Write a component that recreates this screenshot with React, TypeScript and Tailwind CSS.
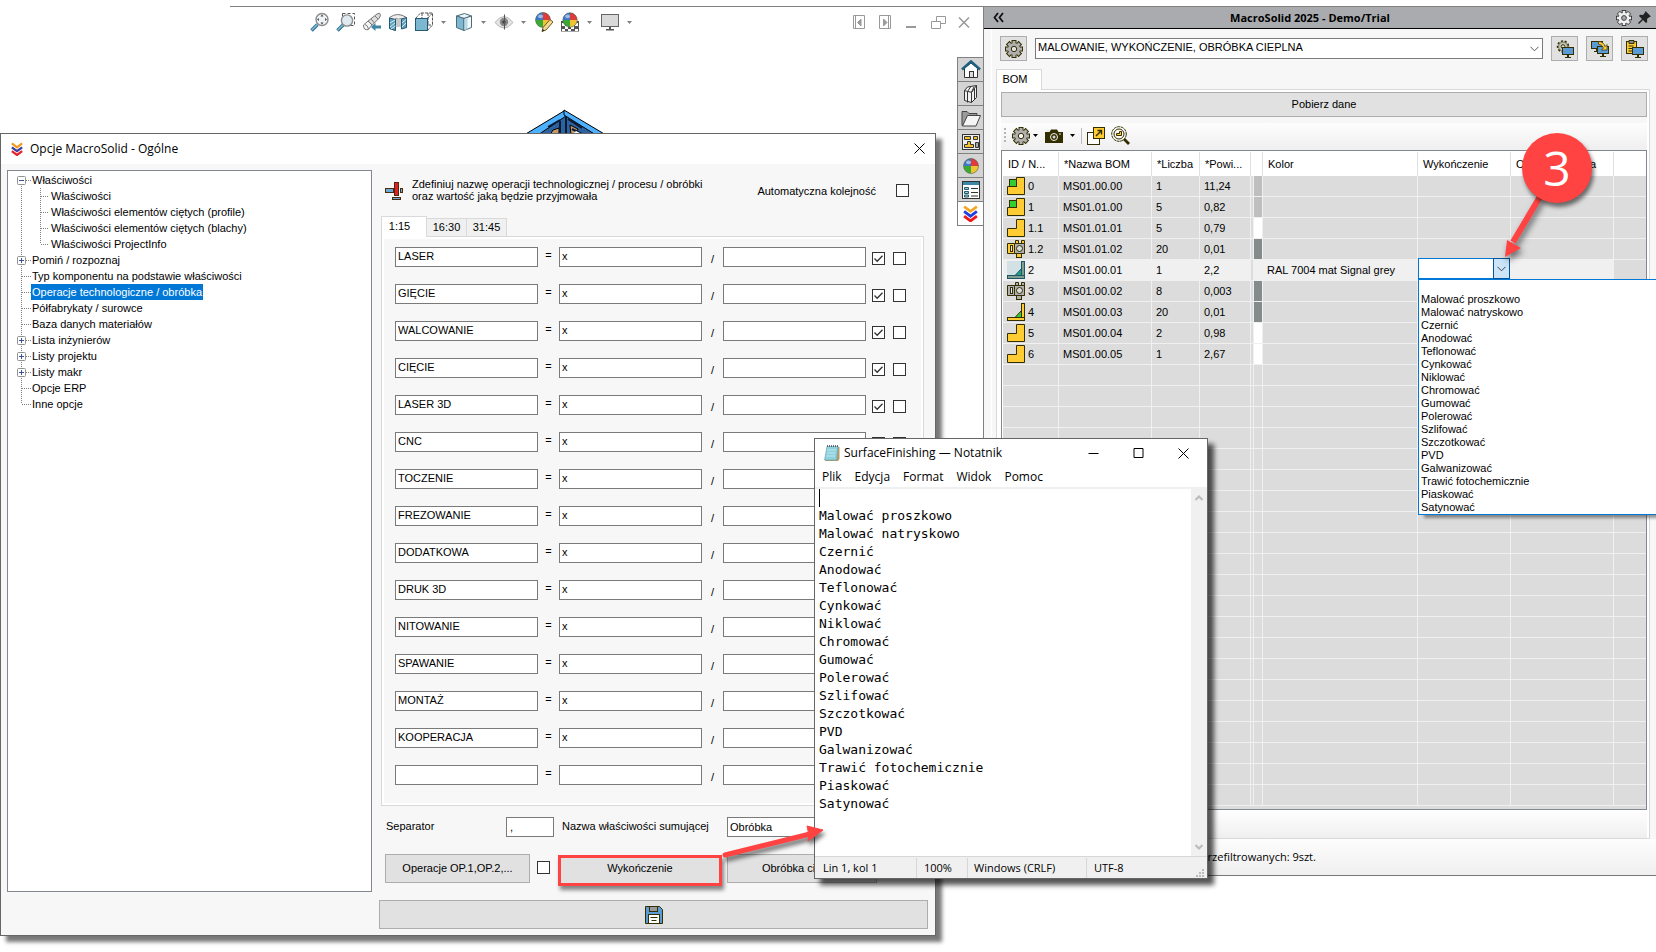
import React from "react";
import clsx from "clsx";

const UI = "font-['Liberation_Sans',Arial,sans-serif]";
const SEGOE = "font-['Open_Sans','Noto_Sans',sans-serif]";

const FINISHES = [
  "Malować proszkowo",
  "Malować natryskowo",
  "Czernić",
  "Anodować",
  "Teflonować",
  "Cynkować",
  "Niklować",
  "Chromować",
  "Gumować",
  "Polerować",
  "Szlifować",
  "Szczotkować",
  "PVD",
  "Galwanizować",
  "Trawić fotochemicznie",
  "Piaskować",
  "Satynować",
];

const OPERATIONS = [
  "LASER",
  "GIĘCIE",
  "WALCOWANIE",
  "CIĘCIE",
  "LASER 3D",
  "CNC",
  "TOCZENIE",
  "FREZOWANIE",
  "DODATKOWA",
  "DRUK 3D",
  "NITOWANIE",
  "SPAWANIE",
  "MONTAŻ",
  "KOOPERACJA",
  "",
];

type RowIcon = "assembly" | "part" | "mixed" | "weldSelected" | "purchased" | "weld";

type BomRow = {
  id: string;
  name: string;
  count: string;
  area: string;
  icon: RowIcon;
  swatch: string;
  color?: string;
  selected?: boolean;
};

const BOM: BomRow[] = [
  { id: "0", name: "MS01.00.00", count: "1", area: "11,24", icon: "assembly", swatch: "bg-[#bfbfbf]" },
  { id: "1", name: "MS01.01.00", count: "5", area: "0,82", icon: "assembly", swatch: "bg-[#bfbfbf]" },
  { id: "1.1", name: "MS01.01.01", count: "5", area: "0,79", icon: "part", swatch: "bg-white" },
  { id: "1.2", name: "MS01.01.02", count: "20", area: "0,01", icon: "mixed", swatch: "bg-[#848b8b]" },
  {
    id: "2",
    name: "MS01.00.01",
    count: "1",
    area: "2,2",
    icon: "weldSelected",
    swatch: "bg-[#f0f0f0]",
    color: "RAL 7004 mat Signal grey",
    selected: true,
  },
  { id: "3", name: "MS01.00.02", count: "8", area: "0,003", icon: "purchased", swatch: "bg-[#848b8b]" },
  { id: "4", name: "MS01.00.03", count: "20", area: "0,01", icon: "weld", swatch: "bg-[#848b8b]" },
  { id: "5", name: "MS01.00.04", count: "2", area: "0,98", icon: "part", swatch: "bg-white" },
  { id: "6", name: "MS01.00.05", count: "1", area: "2,67", icon: "part", swatch: "bg-white" },
];

const EMPTY_ROWS = Array.from({ length: 21 }, (_, i) => i);

/* ---------- icons ---------- */

const Gear: React.FC<{ size?: number; stroke?: string; fill?: string; hole?: string }> = ({
  size = 18,
  stroke = "#332e00",
  fill = "#b0b0b0",
  hole = "#f7f7f7",
}) => (
  <svg width={size} height={size} viewBox="0 0 18 18">
    {[0, 45, 90, 135].map((a) => (
      <rect key={a} x="7" y="0.5" width="4" height="17" fill={fill} stroke={stroke} transform={`rotate(${a} 9 9)`} />
    ))}
    <circle cx="9" cy="9" r="6" fill={fill} />
    <circle cx="9" cy="9" r="2.7" fill={hole} stroke={stroke} />
  </svg>
);

const Caret: React.FC<{ color?: string }> = ({ color = "#808080" }) => (
  <svg width="5" height="3" viewBox="0 0 5 3">
    <path d="M0 0h5L2.5 3z" fill={color} />
  </svg>
);

const Logo: React.FC<{ colors: string[]; size?: number }> = ({ colors, size = 14 }) => (
  <svg width={size} height={size + 2} viewBox="0 0 14 16" fill="none" strokeWidth="2.6">
    {colors.map((c, i) => (
      <path key={c} d={`M1 ${1.5 + i * 4.5}l6 4.5 6-4.5`} stroke={c} />
    ))}
  </svg>
);

const Magnifier = () => (
  <g>
    <path d="M1.5 18.5l6-6" stroke="#2f6f8f" strokeWidth="3.6" />
    <path d="M1.8 18l5.4-5.4" stroke="#7fb6d0" strokeWidth="1.6" />
  </g>
);

const ZoomFit = () => (
  <svg width="20" height="20" viewBox="0 0 20 20" fill="none">
    <Magnifier />
    <circle cx="12" cy="7.5" r="6" fill="#eef3f6" stroke="#8c8c8c" strokeWidth="1.4" />
    <path d="M12 2.6l1.5 1.9h-3zM12 12.4l1.5-1.9h-3zM7 7.5l1.9-1.5v3zM17 7.5l-1.9-1.5v3z" fill="#444" />
  </svg>
);

const ZoomArea = () => (
  <svg width="20" height="20" viewBox="0 0 20 20" fill="none">
    <rect x="6.5" y="1.5" width="12" height="12" stroke="#555" strokeDasharray="3 2" />
    <Magnifier />
    <circle cx="11" cy="8.5" r="5.6" fill="#dfeaf0" stroke="#8c8c8c" strokeWidth="1.4" />
  </svg>
);

const PrevView = () => (
  <svg width="20" height="20" viewBox="0 0 20 20" fill="none" stroke="#777">
    <path d="M6 9l9-7 2.500-.8 1 2-1.200 2.800-7 7z" fill="#ddd" />
    <path d="M13 4l3 3M9 7l3.500 4" />
    <path d="M1.500 13l4.500-4 4 4-3.500 4.500q-5 1.500-5-4.500z" fill="#f4f4f4" />
    <path d="M3 12.500q3 1 3.500 4.500" />
    <path d="M9 15l4.500-4v2.500h5.500v3h-5.500V19z" fill="#3c87a8" stroke="none" />
  </svg>
);

const SectionView = () => (
  <svg width="20" height="20" viewBox="0 0 20 20">
    <path d="M1.500 5.500q8-6 17 0v10h-5v-9h-6v12l-6-2z" fill="#eee" stroke="#777" />
    <path d="M7.500 7q3-2 6 0v8h-6z" fill="#c9c9c9" />
    <path d="M1.500 6l6 1.500v11l-6-2z" fill="#5ea3bf" stroke="#245a73" />
    <path d="M13.500 7l5-1.500v10l-5 1.500z" fill="#5ea3bf" stroke="#245a73" />
    <path d="M2 11l5-3M2 15l5-4M3 17l4.500-3M14 11l4-3.500M14 15l4-4" stroke="#d5ecf5" />
  </svg>
);

const ViewCube = () => (
  <svg width="20" height="20" viewBox="0 0 20 20" fill="none">
    <path
      d="M1.500 6.500l5-5.500h12v12l-5 5.500M13.500 6.500l5-5.500M14 13h4.500M8 1v5M14 1v12"
      stroke="#555"
      strokeDasharray="3 1"
    />
    <rect x="1.500" y="6.500" width="12" height="12" fill="#7db7d0" stroke="#245a73" />
  </svg>
);

const DisplayStyle = () => (
  <svg width="20" height="20" viewBox="0 0 20 20" stroke="#4d6a78">
    <path d="M2.500 4l8-2.500 7 2.500-7.500 2.500z" fill="#e9f5fa" />
    <path d="M2.500 4l7.500 2.500v12l-7.500-3z" fill="#7db7d0" />
    <path d="M10 6.500l7.500-2.500v11.500l-7.500 3z" fill="#f4f8fa" />
    <path d="M10.500 7l3-1v11l-3 1z" fill="#b6d9e6" stroke="none" />
  </svg>
);

const Eye = () => (
  <svg width="20" height="20" viewBox="0 0 20 20">
    <path d="M1 10.500q9-12 18 0-9 11-18 0z" fill="#e4e4e4" stroke="#b5b5b5" />
    <circle cx="10" cy="10" r="4.200" fill="#888" />
    <circle cx="10" cy="10" r="1.800" fill="#444" />
    <path d="M10.500 2.500v15" stroke="#555" />
  </svg>
);

const Ball: React.FC<{ cx: number; cy: number; r: number }> = ({ cx, cy, r }) => (
  <g>
    <circle cx={cx} cy={cy} r={r} fill="#3aaa35" />
    <path d={`M${cx} ${cy}V${cy - r}A${r} ${r} 0 0 1 ${cx + r} ${cy}z`} fill="#e03b3b" />
    <path d={`M${cx} ${cy}V${cy - r}A${r} ${r} 0 0 0 ${cx - r} ${cy}z`} fill="#3e78c9" />
    <path d={`M${cx} ${cy}H${cx + r}A${r} ${r} 0 0 1 ${cx} ${cy + r}z`} fill="#f0c330" />
    <ellipse cx={cx - r / 3} cy={cy - r / 2} rx={r / 3} ry={r / 4} fill="#fff" opacity="0.500" />
    <circle cx={cx} cy={cy} r={r} fill="none" stroke="#555" strokeOpacity="0.500" />
  </g>
);

const Appearance = () => (
  <svg width="20" height="20" viewBox="0 0 20 20">
    <Ball cx={9} cy={8} r={7.5} />
    <path d="M8 19.500l1-4 7-8 3 2.500-7 8z" fill="#f3d98b" stroke="#6b5a2a" />
    <path d="M8 19.500l.8-2.500 1.700 1.500z" fill="#222" />
  </svg>
);

const Scene = () => (
  <svg width="20" height="20" viewBox="0 0 20 20">
    <rect x="1" y="9" width="18" height="10.500" fill="#555" />
    <path d="M2 11h3v3H2zM5 14h3v3H5zM11 14h3v3h-3zM15 11h3v3h-3zM2 17h3v2H2zM8 17h3v2H8zM15 17h3v2h-3z" fill="#fff" />
    <Ball cx={10} cy={8} r={7.2} />
  </svg>
);

const Monitor = () => (
  <svg width="20" height="20" viewBox="0 0 20 20">
    <rect x="1.500" y="2.500" width="17" height="12" fill="#d9d9d9" stroke="#666" />
    <path d="M9 15h2v2h3v1.500H6V17h3z" fill="#555" />
  </svg>
);

const BomIcon: React.FC<{ kind: RowIcon }> = ({ kind }) => {
  const dark = "#332e00";
  const body = kind === "mixed" ? "#ffcc33" : "#b0b0b0";
  return (
    <svg
      width="18"
      height="18"
      viewBox="0 0 18 18"
      stroke={dark}
      className={kind === "weldSelected" ? "bg-[#d3e0e4]" : undefined}
    >
      {(kind === "assembly" || kind === "part") && <path d="M9.500 .5h8v17h-17v-8h9z" fill="#ffcc33" />}
      {kind === "assembly" && <rect x="2.500" y="2.500" width="7" height="7" fill="#33cc33" />}
      {(kind === "mixed" || kind === "purchased") && (
        <>
          <rect x="9.500" y="12.500" width="5" height="5" fill={body} />
          <path d="M8.500 .5h3v3h3v-3h3v13h-9z" fill={body} />
          <path d="M.5 3.500h7v10h-7z" fill={body} />
          <path d="M7.500 3.500h10v10h-10z" fill="#b0b0b0" />
          <rect x="3.500" y="5.500" width="2" height="6" fill="#e8e8e8" />
          <circle cx="12.500" cy="8.500" r="3" fill="#dcdcdc" />
        </>
      )}
      {(kind === "weld" || kind === "weldSelected") && (
        <g stroke={kind === "weld" ? dark : "#1f5668"}>
          <path d="M8 14.500l6.500-7v7z" fill={kind === "weld" ? "#33cc33" : "#1f9d86"} />
          <rect x="14.500" y=".5" width="3" height="14" fill={kind === "weld" ? "#ffcc33" : "#7f9f8c"} />
          <rect x=".5" y="14.500" width="17" height="3" fill={kind === "weld" ? "#ffcc33" : "#7f9f8c"} />
        </g>
      )}
    </svg>
  );
};

const Screen: React.FC<{ x: number; y: number }> = ({ x, y }) => (
  <g transform={`translate(${x} ${y})`}>
    <rect x="0.500" y="0.500" width="11" height="7" fill="#5b9bd5" stroke="#332e00" />
    <path d="M5 8h2v2h2v1H3v-1h2z" fill="#332e00" />
  </g>
);

/* ---------- shared controls ---------- */

const CheckBox: React.FC<{ label: string; checked?: boolean }> = ({ label, checked }) => (
  <span className="relative block size-[13px] shrink-0">
    <input
      type="checkbox"
      aria-label={label}
      defaultChecked={checked}
      className="peer block size-[13px] appearance-none border border-[#333] bg-white"
    />
    <svg
      viewBox="0 0 13 13"
      className="pointer-events-none absolute inset-0 hidden peer-checked:block"
      fill="none"
      stroke="#333"
      strokeWidth="1.3"
    >
      <path d="M2.500 6.500l2.700 2.800 5.300-5.600" />
    </svg>
  </span>
);

const TextBox: React.FC<{ label: string; value?: string; className?: string }> = ({ label, value = "", className }) => (
  <input
    type="text"
    aria-label={label}
    defaultValue={value}
    className={clsx("h-5 border border-[#7a7a7a] bg-white px-[2px] pb-[2px] text-[11px] leading-4 text-black", className)}
  />
);

const PushButton: React.FC<{ children: React.ReactNode; label?: string; className?: string }> = ({
  children,
  label,
  className,
}) => (
  <button
    type="button"
    aria-label={label}
    className={clsx("flex items-center justify-center border border-[#adadad] bg-[#e1e1e1] text-[11px]", className)}
  >
    {children}
  </button>
);

/* ---------- viewport ---------- */

const TOOLS: { label: string; icon: React.ReactNode; menu?: boolean }[] = [
  { label: "Powiększ do okna", icon: <ZoomFit /> },
  { label: "Powiększ obszar", icon: <ZoomArea /> },
  { label: "Poprzedni widok", icon: <PrevView /> },
  { label: "Widok przekroju", icon: <SectionView /> },
  { label: "Orientacja widoku", icon: <ViewCube />, menu: true },
  { label: "Styl wyświetlania", icon: <DisplayStyle />, menu: true },
  { label: "Ukryj / pokaż", icon: <Eye />, menu: true },
  { label: "Edytuj wygląd", icon: <Appearance /> },
  { label: "Zastosuj scenę", icon: <Scene />, menu: true },
  { label: "Ustawienia widoku", icon: <Monitor />, menu: true },
];

const WINDOW_ICONS = [
  <g key="l">
    <path d="M.5 .5h11v13H.5zM2.500 .5v13" />
    <path d="M8 4v7L4.500 7.500z" fill="#999" />
  </g>,
  <g key="r">
    <path d="M.5 .5h11v13H.5zM9.500 .5v13" />
    <path d="M4.500 4v7L8 7.500z" fill="#999" />
  </g>,
  <path key="m" d="M1 12h10" strokeWidth="2" />,
  <path key="o" d="M5.500 6V1.500h9v7H10M.5 6.500h9v7h-9z" />,
  <path key="x" d="M2 2.500l10 10M12 2.500l-10 10" strokeWidth="1.5" />,
];

const TaskTabs: React.FC = () => {
  const icons: [string, React.ReactNode][] = [
    [
      "Zasoby",
      <g key="home" stroke="#333">
        <path d="M3.500 8v9.500h13V8L10 3z" fill="#fff" />
        <path d="M1 9.500l9-8 9 8" fill="none" stroke="#1f5f80" strokeWidth="2.600" />
        <rect x="8.500" y="11.500" width="4" height="6" fill="#ddd" />
      </g>,
    ],
    [
      "Biblioteka",
      <g key="books" stroke="#333" fill="#f2f2f2">
        <path d="M3.500 6.500l3-3.500 9-1.500v12l-5 5-7-2z" />
        <path d="M3.500 6.500l3 1v11M6.500 7.500l3-4.500M7 7.500l3.500 .8v10M10.500 8.300l2.500-5.500M10.500 8.500l5-7M13.500 4.500v11.500" fill="none" />
      </g>,
    ],
    [
      "Eksplorator",
      <g key="folder" stroke="#444">
        <path d="M1 3.500h5l2 2h8v4l-4 8H1z" fill="#9a9a9a" />
        <path d="M1.500 18l5-10.500h13L15 18z" fill="#f5f5f5" />
      </g>,
    ],
    [
      "Paleta widoków",
      <g key="palette" stroke="#333">
        <rect x="1.500" y="2.500" width="17" height="15" fill="#eee" />
        <path d="M3.500 4.500h6v3h-6zM12.500 4.500h4v3h-4zM6.500 9.500h3v3h3v3h-9v-3h3z" fill="#f5c22b" />
        <path d="M14.500 10.500h3v5h-3z" fill="#aaa" />
      </g>,
    ],
    ["Wyglądy", <Ball key="ball" cx={10} cy={10} r={7.5} />],
    [
      "Właściwości",
      <g key="props">
        <rect x="1.500" y="1.500" width="17" height="17" fill="#fff" stroke="#333" />
        <path d="M2 3.500h16" stroke="#3c87a8" strokeWidth="3" />
        <path d="M3.500 7.500h4v2h-4zM3.500 11.500h4v2h-4zM3.500 15h4v2h-4z" fill="#9cc" stroke="#245a73" />
        <path d="M10 8.500h7M10 12.500h7M10 16h7" stroke="#333" />
      </g>,
    ],
  ];
  return (
    <nav className="mt-[27px] flex w-[26px] flex-col border-y border-l border-[#808080]">
      {icons.map(([label, icon]) => (
        <button
          key={label}
          type="button"
          aria-label={label}
          className="flex h-6 items-center justify-center border-b border-[#808080] bg-[#d4d4d4]"
        >
          <svg width="20" height="20" viewBox="0 0 20 20">
            {icon}
          </svg>
        </button>
      ))}
      <button type="button" aria-label="MacroSolid" className="flex h-[23px] items-center justify-center bg-white">
        <Logo colors={["#f5a623", "#1f3fe0", "#f01818"]} size={15} />
      </button>
    </nav>
  );
};

const Viewport: React.FC = () => (
  <div className="relative ml-[230px] flex flex-1 items-start justify-between border-t border-[#808080] pl-20">
    <div className="flex items-center gap-[6px] pt-[5px]">
      {TOOLS.map((t) => (
        <button key={t.label} type="button" aria-label={t.label} className="flex items-center">
          {t.icon}
          {t.menu && (
            <span className="flex w-[14px] justify-center pl-[5px]">
              <Caret />
            </span>
          )}
        </button>
      ))}
    </div>
    <div className="flex flex-col items-end">
      <div className="flex gap-[11px] pt-2 pr-[11px]">
        {WINDOW_ICONS.map((p) => (
          <button key={p.key} type="button" aria-label={`Okno ${p.key}`}>
            <svg width="15" height="15" viewBox="0 0 15 15" fill="none" stroke="#999">
              {p}
            </svg>
          </button>
        ))}
      </div>
      <TaskTabs />
    </div>
    <svg className="absolute top-[102px] left-[294px]" width="82" height="26" viewBox="0 0 82 26">
      <path d="M0 26L40 2l42 24z" fill="#2c62a0" />
      <path d="M0 26L40 2l2 5L14 26z" fill="#4db1ff" stroke="#000" />
      <path d="M82 26L40 1v5l32 20z" fill="#4db1ff" stroke="#000" />
      <path d="M26 26l3-5 6-2v7zM46 16l8 4-4 6h-3z" fill="#c49a6c" stroke="#000" />
      <path d="M36 12v14M42 8v18M24 18l12-7M44 10l14 9M48 20l12 6" stroke="#0a1a30" strokeWidth="2" />
      <path d="M48 26l4-4 8 4z" fill="#fff" />
    </svg>
  </div>
);

/* ---------- MacroSolid panel ---------- */

const FinishCombo: React.FC = () => (
  <div className="relative -mt-[2px] h-[18px]">
    <div className="flex h-[21px] border border-[#0078d7] bg-white">
      <input type="text" aria-label="Wykończenie" className="h-full min-w-0 flex-1 px-1" />
      <button
        type="button"
        aria-label="Rozwiń"
        className="-my-px -mr-px flex w-[17px] items-center justify-center border border-[#005499] bg-[#cce4f7]"
      >
        <svg width="9" height="6" viewBox="0 0 9 6" fill="none" stroke="#444">
          <path d="M.5 .8l4 4 4-4" />
        </svg>
      </button>
    </div>
    <ul
      role="listbox"
      aria-label="Lista wykończeń"
      className="absolute top-[21px] left-0 z-10 w-60 border border-[#0078d7] bg-white pt-[13px] shadow-[6px_3px_3px_#00000066]"
    >
      {FINISHES.map((f) => (
        <li
          key={f}
          role="option"
          aria-selected="false"
          className="h-[13px] pl-[2px] text-[11px] leading-[13px] whitespace-nowrap"
        >
          {f}
        </li>
      ))}
    </ul>
  </div>
);

const CELL = "h-[21px] border-r border-b border-[#f0f0f0] p-0 pl-1 whitespace-nowrap";
const HEAD = "h-6 border-r border-[#e0e0e0] bg-white p-0 pl-[5px] text-left font-normal whitespace-nowrap";

const BomTable: React.FC = () => (
  <div className="border border-[#828790] bg-[#dcdcdc] pb-[3px]">
    <table className="w-full table-fixed border-separate border-spacing-0 border-t border-l border-white text-[11px] leading-[13px]">
      <colgroup>
        <col className="w-[56px]" />
        <col className="w-[93px]" />
        <col className="w-[48px]" />
        <col className="w-[51px]" />
        <col className="w-[12px]" />
        <col className="w-[155px]" />
        <col className="w-[93px]" />
        <col className="w-[103px]" />
        <col />
      </colgroup>
      <thead>
        <tr>
          <th className={HEAD}>ID / N...</th>
          <th className={HEAD}>*Nazwa BOM</th>
          <th className={HEAD}>*Liczba</th>
          <th className={HEAD}>*Powi...</th>
          <th className={HEAD} aria-label="Podgląd koloru" />
          <th className={HEAD}>Kolor</th>
          <th className={HEAD}>Wykończenie</th>
          <th className={HEAD}>Obróbka cieplna</th>
          <th className="bg-white" aria-label="Pusta" />
        </tr>
      </thead>
      <tbody>
        {BOM.map((r) => (
          <tr key={r.id}>
            <td className={clsx(CELL, r.selected && "bg-[#f0f0f0]")}>
              <span className="flex h-5 items-center gap-[3px]">
                <BomIcon kind={r.icon} />
                {r.id}
              </span>
            </td>
            <td className={clsx(CELL, r.selected && "bg-[#f0f0f0]")}>{r.name}</td>
            <td className={clsx(CELL, r.selected && "bg-[#f0f0f0]")}>{r.count}</td>
            <td className={clsx(CELL, r.selected && "bg-[#f0f0f0]")}>{r.area}</td>
            <td className="border-r border-b border-[#f0f0f0] p-0 pl-[2px]">
              <div className={clsx("h-5 border-l border-[#f0f0f0]", r.swatch)} />
            </td>
            <td className={clsx(CELL, r.selected && "bg-[#f0f0f0]")}>{r.color}</td>
            <td className="border-r border-b border-[#f0f0f0] p-0 align-top">{r.selected && <FinishCombo />}</td>
            <td className={clsx(CELL, r.selected && "bg-[#f0f0f0]")} />
            <td className="border-b border-[#f0f0f0]" />
          </tr>
        ))}
        {EMPTY_ROWS.map((n) => (
          <tr key={n}>
            <td className={CELL} />
            <td className={CELL} />
            <td className={CELL} />
            <td className={CELL} />
            <td className="border-r border-b border-[#f0f0f0] p-0 pl-[2px]">
              <div className="h-5 border-l border-[#f0f0f0]" />
            </td>
            <td className={CELL} />
            <td className={CELL} />
            <td className={CELL} />
            <td className="border-b border-[#f0f0f0]" />
          </tr>
        ))}
      </tbody>
    </table>
  </div>
);

const Panel: React.FC = () => (
  <aside className="relative w-[673px] shrink-0 border-t border-b border-l border-t-[#808080] border-b-[#777] border-l-[#808080] bg-[#f7f7f7]">
    <header className="flex h-[22px] items-center border-b border-black bg-[#a9abae] pr-[5px] pl-[9px]">
      <button type="button" aria-label="Zwiń panel">
        <svg width="11" height="11" viewBox="0 0 11 11" fill="none" stroke="#111" strokeWidth="1.8">
          <path d="M5 1L1.500 5.500 5 10M10 1L6.500 5.500 10 10" />
        </svg>
      </button>
      <h2 className={clsx("flex-1 text-center text-[11px] leading-4 font-bold", SEGOE)}>MacroSolid 2025 - Demo/Trial</h2>
      <div className="flex items-center gap-[6px]">
        <button type="button" aria-label="Ustawienia">
          <Gear size={16} stroke="#333" fill="#f0f0f0" hole="#a9abae" />
        </button>
        <button type="button" aria-label="Przypnij">
          <svg width="13" height="13" viewBox="0 0 13 13" fill="#222">
            <path d="M7.500 0L13 5.500l-1.500.5-2.500 2 .2 3-1.200 1L5 9l-4 4-1-1 4-4-3-3 1-1.200 3 .2 2-2.500z" />
          </svg>
        </button>
      </div>
    </header>

    <div className="ml-[7px] border-l border-white pt-[7px] pr-[6px] pl-1">
      <div className="flex items-center gap-2 pr-[2px] pl-1">
        <PushButton label="Konfiguracja" className="h-[25px] w-[27px]">
          <Gear hole="#e1e1e1" />
        </PushButton>
        <div className="relative flex-1">
          <select
            aria-label="Szablon"
            className="block h-[21px] w-full appearance-none border border-[#7a7a7a] bg-white pb-[2px] pl-[2px] text-[11px]"
          >
            <option>MALOWANIE, WYKOŃCZENIE, OBRÓBKA CIEPLNA</option>
          </select>
          <svg
            className="pointer-events-none absolute top-2 right-1"
            width="9"
            height="6"
            viewBox="0 0 9 6"
            fill="none"
            stroke="#555"
          >
            <path d="M.5 .8l4 4 4-4" />
          </svg>
        </div>
        <PushButton label="Komputer" className="h-[25px] w-[27px]">
          <svg width="18" height="18" viewBox="0 0 18 18">
            <circle cx="7" cy="6.500" r="5" fill="none" stroke="#332e00" strokeDasharray="2 1.500" strokeWidth="2.500" />
            <circle cx="7" cy="6.500" r="4.500" fill="#c4c4b8" stroke="#77745a" />
            <circle cx="7" cy="6.500" r="1.800" fill="#e1e1e1" stroke="#332e00" />
            <Screen x={6} y={7} />
          </svg>
        </PushButton>
        <PushButton label="Kopiuj ustawienia" className="h-[25px] w-[27px]">
          <svg width="18" height="18" viewBox="0 0 18 18">
            <Screen x={0} y={1} />
            <Screen x={6} y={6} />
            <path
              d="M7.500 1.500q5 0 6.500 5l2-2V10h-5.500l2-2Q11 4.500 7.500 4z"
              fill="#ffcc33"
              stroke="#332e00"
              strokeWidth="0.700"
            />
          </svg>
        </PushButton>
        <PushButton label="Raport" className="h-[25px] w-[27px]">
          <svg width="18" height="18" viewBox="0 0 18 18">
            <rect x=".5" y="1.500" width="10" height="12" fill="#ffcc33" stroke="#332e00" />
            <path d="M3 .5h5v3H3z" fill="#888" stroke="#332e00" />
            <path d="M2.500 6h5M2.500 8.500h4M2.500 11h4" stroke="#332e00" />
            <Screen x={6} y={7} />
          </svg>
        </PushButton>
      </div>

      <div role="tablist" className="mt-2 flex">
        <button
          type="button"
          role="tab"
          aria-selected="true"
          className="relative -mb-px h-[21px] w-[46px] border-x border-t border-[#d9d9d9] bg-white pr-2 pb-[2px] text-[11px]"
        >
          BOM
        </button>
      </div>
      <div className="border border-[#d9d9d9] bg-white pt-[2px] pr-[2px] pl-1">
        <PushButton className="h-[25px] w-full">Pobierz dane</PushButton>
        <div className="bg-[#f7f7f7] pt-[6px]">
          <div className="flex h-[27px] items-center bg-linear-to-b from-[#fdfdfd] to-[#efefef] pb-[2px] pl-[3px]">
            <svg width="2" height="15" viewBox="0 0 2 15" fill="#b5b5b5">
              <path d="M0 0h2v2H0zM0 4h2v2H0zM0 8h2v2H0zM0 12h2v2H0z" />
            </svg>
            <button type="button" aria-label="Opcje BOM" className="ml-[6px] flex items-center gap-[3px]">
              <Gear />
              <Caret color="#000" />
            </button>
            <button type="button" aria-label="Zdjęcia" className="ml-[7px] flex items-center gap-[7px]">
              <svg width="18" height="14" viewBox="0 0 18 14">
                <path d="M0 3h4.500L6 .5h6L13.500 3H18v11H0z" fill="#332e00" />
                <circle cx="9" cy="8" r="3.500" fill="none" stroke="#f0f0f0" />
                <circle cx="9" cy="8" r="1.500" fill="#d8d8d8" />
                <path d="M14 5h2M2 1.500h2" stroke="#e0e0e0" />
              </svg>
              <Caret color="#000" />
            </button>
            <span className="mr-[5px] ml-[6px] h-4 w-px bg-[#bdbdbd]" />
            <button type="button" aria-label="Otwórz w oknie">
              <svg width="18" height="18" viewBox="0 0 18 18" stroke="#332e00">
                <rect x=".5" y="5.500" width="12" height="12" fill="#fff" />
                <rect x="6.500" y=".5" width="11" height="11" fill="#ffcc33" />
                <path d="M9 9l5-5M10.500 3.500h4v4" fill="none" strokeWidth="1.400" />
              </svg>
            </button>
            <button type="button" aria-label="Szukaj" className="ml-[6px]">
              <svg width="19" height="19" viewBox="0 0 19 19" fill="none" stroke="#332e00">
                <circle cx="8" cy="8" r="7.300" strokeDasharray="3 .6" />
                <circle cx="8" cy="8" r="5" fill="#fbfbf4" />
                <path d="M5.500 9.500h5V5.500h-2v2h-3z" fill="#ffcc33" />
                <path d="M13 13l5 5" strokeWidth="2.800" />
              </svg>
            </button>
          </div>
        </div>
        <BomTable />
        <div className="h-7 bg-linear-to-b from-white to-[#efefef]" />
      </div>
    </div>
    <footer
      className={clsx(
        "flex h-9 items-center bg-linear-to-b from-[#fdfdfd] to-[#efefef] pl-[217px] text-[11px]",
        SEGOE,
      )}
    >
      Przefiltrowanych: 9szt.
    </footer>
  </aside>
);

/* ---------- options dialog ---------- */

type Node = { label: string; expand?: "+" | "-"; child?: boolean; selected?: boolean; last?: boolean };

const TREE: Node[] = [
  { label: "Właściwości", expand: "-" },
  { label: "Właściwości", child: true },
  { label: "Właściwości elementów ciętych (profile)", child: true },
  { label: "Właściwości elementów ciętych (blachy)", child: true },
  { label: "Właściwości ProjectInfo", child: true, last: true },
  { label: "Pomiń / rozpoznaj", expand: "+" },
  { label: "Typ komponentu na podstawie właściwości" },
  { label: "Operacje technologiczne / obróbka", selected: true },
  { label: "Półfabrykaty / surowce" },
  { label: "Baza danych materiałów" },
  { label: "Lista inżynierów", expand: "+" },
  { label: "Listy projektu", expand: "+" },
  { label: "Listy makr", expand: "+" },
  { label: "Opcje ERP" },
  { label: "Inne opcje", last: true },
];

const TreeGutter: React.FC<{ node: Node; first: boolean }> = ({ node, first }) => {
  const width = node.child ? 42 : 23;
  return (
    <svg width={width} height="16" viewBox={`0 0 ${width} 16`} fill="none" stroke="#808080" className="shrink-0">
      <g strokeDasharray="1 1">
        <path d={`M13.500 ${first ? 8 : 0}V${node.last && !node.child ? 8 : 16}`} />
        {!node.child && <path d="M14 8.500h9" />}
        {node.child && <path d={`M32.500 0V${node.last ? 8 : 16}M33 8.500h8`} />}
      </g>
      {node.expand && (
        <>
          <rect x="9.500" y="4.500" width="8" height="8" rx="1" fill="#fff" stroke="#919191" />
          <path d={node.expand === "+" ? "M11 8.500h5M13.500 6v5" : "M11 8.500h5"} stroke="#3c4f9a" />
        </>
      )}
    </svg>
  );
};

const Tree: React.FC = () => (
  <ul role="tree" aria-label="Kategorie opcji" className="w-[365px] shrink-0 border border-[#828790] bg-white pt-px">
    {TREE.map((n, i) => (
      <li key={i} role="treeitem" aria-selected={!!n.selected} className="flex h-4 items-center text-[11px] leading-4">
        <TreeGutter node={n} first={i === 0} />
        <span className={clsx("px-px", n.selected && "bg-[#0078d7] text-white")}>{n.label}</span>
      </li>
    ))}
  </ul>
);

const OperationRow: React.FC<{ name: string; index: number }> = ({ name, index }) => (
  <div className="flex h-5 items-center text-[11px] leading-4">
    <TextBox label={`Operacja ${index}`} value={name} className="w-[143px]" />
    <span className="w-[21px] pb-1 text-center">=</span>
    <TextBox label={`Wartość ${index}`} value={name ? "x" : ""} className="w-[143px]" />
    <span className="w-[21px] pt-1 text-center">/</span>
    <TextBox label={`Druga wartość ${index}`} className="w-[143px]" />
    <div className="flex gap-2 pt-[3px] pl-[6px]">
      <CheckBox label={`Aktywna ${index}`} checked />
      <CheckBox label={`Sumuj ${index}`} />
    </div>
  </div>
);

const OptionsDialog: React.FC = () => (
  <section
    aria-label="Opcje MacroSolid"
    className="absolute top-[133px] left-0 w-[936px] border border-[#666] bg-[#f7f7f7] shadow-[6px_6px_4px_#00000088]"
  >
    <header className="flex h-[30px] items-center bg-white pr-[10px] pb-px pl-[10px]">
      <Logo colors={["#f39a1e", "#3a3f9e", "#e8202a"]} size={12} />
      <h1 className={clsx("flex-1 pl-[7px] text-[12px]", SEGOE)}>Opcje MacroSolid - Ogólne</h1>
      <button type="button" aria-label="Zamknij">
        <svg width="11" height="11" viewBox="0 0 11 11" stroke="#000">
          <path d="M.5 .5l10 10M10.500 .5l-10 10" />
        </svg>
      </button>
    </header>
    <div className="flex pt-[6px] pr-[7px] pb-[6px] pl-[6px]">
      <div className="mb-[37px] flex">
        <Tree />
      </div>
      <div className="flex flex-1 flex-col pl-[7px]">
        <div className="flex h-[46px] items-start pt-2 pl-[6px]">
          <svg width="18" height="18" viewBox="0 0 18 18" stroke="#4a2b10" className="mt-1">
            <rect x=".5" y="6.500" width="8" height="4" fill="#6aa9d8" />
            <rect x="15.500" y="6.500" width="2" height="4" fill="#6aa9d8" />
            <rect x="9.500" y=".5" width="4" height="13" fill="#e02020" />
            <rect x="7.500" y="15.500" width="8" height="2" fill="#6aa9d8" />
          </svg>
          <p className="flex-1 pl-[9px] text-[11px] leading-3 whitespace-pre-line">
            {"Zdefiniuj nazwę operacji technologicznej / procesu / obróbki\noraz wartość jaką będzie przyjmowała"}
          </p>
          <div className="flex items-center gap-5 pt-[5px] pr-[19px]">
            <span className="pt-[2px] text-[11px] leading-3">Automatyczna kolejność</span>
            <CheckBox label="Automatyczna kolejność" />
          </div>
        </div>

        <div className="pr-1 pl-[2px]">
          <div role="tablist" className="flex items-end text-[11px]">
            <button
              type="button"
              role="tab"
              aria-selected="true"
              className="relative -mb-px h-[21px] w-[46px] border-x border-t border-[#d9d9d9] bg-white pr-[9px] pb-[2px]"
            >
              1:15
            </button>
            <button
              type="button"
              role="tab"
              aria-selected="false"
              className="h-[18px] w-10 border-t border-r border-[#d9d9d9] bg-[#f0f0f0]"
            >
              16:30
            </button>
            <button
              type="button"
              role="tab"
              aria-selected="false"
              className="h-[18px] w-10 border-t border-r border-[#d9d9d9] bg-[#f0f0f0]"
            >
              31:45
            </button>
          </div>
          <div className="border border-[#d9d9d9] bg-white p-[2px]">
            <div className="flex flex-col gap-[17px] bg-[#f7f7f7] pt-2 pb-[18px] pl-[11px]">
              {OPERATIONS.map((name, i) => (
                <OperationRow key={i} name={name} index={i + 1} />
              ))}
            </div>
          </div>
        </div>

        <div className="flex items-center pt-[11px] pl-[7px] text-[11px] leading-4">
          <label htmlFor="separator" className="w-[120px] pb-[2px]">
            Separator
          </label>
          <input id="separator" defaultValue="," className="h-5 w-12 border border-[#7a7a7a] bg-white px-[3px]" />
          <label htmlFor="sum-name" className="w-[173px] pb-[2px] pl-2">
            Nazwa właściwości sumującej
          </label>
          <input id="sum-name" defaultValue="Obróbka" className="h-5 w-[150px] border border-[#7a7a7a] bg-white px-[2px]" />
        </div>

        <div className="flex items-start pt-[17px] pl-[6px]">
          <PushButton className="h-[29px] w-[145px]">Operacje OP.1,OP.2,...</PushButton>
          <span className="px-[7px] pt-[7px]">
            <CheckBox label="Operacje OP" />
          </span>
          <button
            type="button"
            className="mt-px -mb-[3px] ml-px h-[31px] w-[164px] border-[3px] border-[#ff4343] bg-[#e1e1e1] pb-1 text-[11px] shadow-[2px_4px_4px_#00000077]"
          >
            Wykończenie
          </button>
          <PushButton className="ml-[5px] h-[29px] w-[150px]">Obróbka cieplna</PushButton>
        </div>

        <PushButton label="Zapisz" className="mt-[17px] h-[29px] w-full">
          <svg width="18" height="18" viewBox="0 0 18 18" stroke="#332e00">
            <path d="M.5 .5h14l3 3v14H.5z" fill="#5b9bd5" />
            <rect x="4.500" y=".5" width="8" height="5" fill="#999" />
            <rect x="3.500" y="8.500" width="11" height="9" fill="#fff" />
            <path d="M5.500 11.500h7M6.500 14.500h5" />
          </svg>
        </PushButton>
      </div>
    </div>
  </section>
);

/* ---------- notepad ---------- */

const Notepad: React.FC = () => (
  <section
    aria-label="Notatnik"
    className={clsx(
      "absolute top-[438px] left-[814px] w-[394px] border border-[#666] bg-white text-[12px] shadow-[6px_6px_5px_#000000aa]",
      SEGOE,
    )}
  >
    <header className="flex h-[28px] items-center pr-[18px] pl-[9px]">
      <svg width="16" height="17" viewBox="0 0 16 17">
        <path d="M3 2h12.500v12L14 16H1z" fill="#b59a68" />
        <path d="M3 1.500h11L12.500 15H.5z" fill="#8fd0de" stroke="#5fa5b5" strokeWidth="0.600" />
        <path d="M3 5h9M3 8h8.500M2.500 11h8.500" stroke="#bfe8f0" />
        <path d="M3 1h11" stroke="#444" strokeWidth="1.500" strokeDasharray="1 1" />
      </svg>
      <h2 className="flex-1 pl-1 text-[12px]">SurfaceFinishing — Notatnik</h2>
      <div className="flex gap-[34px]">
        {["M.5 5.500h10", "M1 .5h9v9H1z", "M.5 .5l10 10M10.500 .5l-10 10"].map((d, i) => (
          <button key={d} type="button" aria-label={["Minimalizuj", "Maksymalizuj", "Zamknij"][i]}>
            <svg width="11" height="11" viewBox="0 0 11 11" fill="none" stroke="#000">
              <path d={d} />
            </svg>
          </button>
        ))}
      </div>
    </header>
    <nav className="flex h-[22px] gap-[13px] border-b-2 border-[#f0f0f0] pl-[7px] leading-5">
      {["Plik", "Edycja", "Format", "Widok", "Pomoc"].map((m) => (
        <button key={m} type="button">
          {m}
        </button>
      ))}
    </nav>
    <div className="flex">
      <div className="flex-1 pb-[43px] pl-1 font-['DejaVu_Sans_Mono','Liberation_Mono',monospace] text-[13px] leading-[18px]">
        <div className="h-[18px] w-px bg-black" />
        {FINISHES.map((f) => (
          <div key={f}>{f}</div>
        ))}
      </div>
      <div className="flex w-4 flex-col items-center justify-between bg-[#f0f0f0] py-[6px]">
        <svg width="8" height="6" viewBox="0 0 8 6" fill="none" stroke="#bbb" strokeWidth="2">
          <path d="M.5 5L4 1.500 7.500 5" />
        </svg>
        <svg width="8" height="6" viewBox="0 0 8 6" fill="none" stroke="#bbb" strokeWidth="2">
          <path d="M.5 1L4 4.500 7.500 1" />
        </svg>
      </div>
    </div>
    <footer className="flex h-[22px] items-center border-t border-[#d7d7d7] bg-[#f0f0f0] text-[11px] leading-5">
      <span className="w-[102px] border-r border-[#d7d7d7] pl-2">Lin 1, kol 1</span>
      <span className="w-[51px] border-r border-[#d7d7d7] pl-[7px]">100%</span>
      <span className="w-[119px] border-r border-[#d7d7d7] pl-[6px]">Windows (CRLF)</span>
      <span className="flex-1 pl-[7px]">UTF-8</span>
      <svg width="9" height="9" viewBox="0 0 9 9" fill="#bbb" className="mr-[2px] self-end">
        <path d="M6 0h2v2H6zM6 3h2v2H6zM6 6h2v2H6zM3 3h2v2H3zM3 6h2v2H3zM0 6h2v2H0z" />
      </svg>
    </footer>
  </section>
);

/* ---------- annotations ---------- */

const StepMarker: React.FC = () => (
  <div className="absolute top-[133px] right-[64px] z-20">
    <svg width="100" height="130" viewBox="0 0 100 130" className="drop-shadow-[2px_4px_3px_#00000088]">
      <path d="M49 62L21 109" stroke="#ff4343" strokeWidth="6" />
      <path d="M13 124l2-17 14 8z" fill="#ff4343" />
    </svg>
    <span
      className={clsx(
        "absolute top-0 right-0 flex size-[70px] items-center justify-center rounded-full bg-[#ff4343] text-[48px] leading-[70px] text-white shadow-[2px_4px_4px_#00000088]",
        SEGOE,
      )}
    >
      3
    </span>
  </div>
);

const LinkArrow: React.FC = () => (
  <svg
    className="pointer-events-none absolute top-[822px] left-[718px] drop-shadow-[2px_4px_2px_#00000088]"
    width="110"
    height="40"
    viewBox="0 0 110 40"
  >
    <path d="M7 33L92 12" stroke="#ff4343" strokeWidth="5" strokeLinecap="round" />
    <path d="M105 8L90 19l1-6-2-9z" fill="#ff4343" stroke="#ff4343" />
  </svg>
);

const App: React.FC = () => {
  return (
    <main className={clsx("relative min-h-screen overflow-hidden bg-white pt-[6px] text-black", UI)}>
      <div className="relative flex">
        <Viewport />
        <Panel />
      </div>
      <OptionsDialog />
      <Notepad />
      <LinkArrow />
      <StepMarker />
    </main>
  );
};

export default App;
